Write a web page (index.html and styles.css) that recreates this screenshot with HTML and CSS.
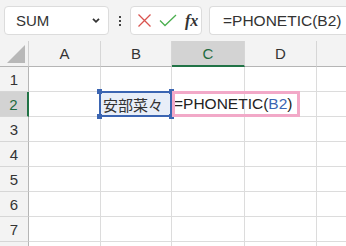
FILE: index.html
```html
<!DOCTYPE html>
<html>
<head>
<meta charset="utf-8">
<link rel="stylesheet" href="styles.css">
</head>
<body>
<div class="app">
  <div class="toolbar">
    <div class="namebox">
      <span class="name">SUM</span>
      <svg class="chev" width="10" height="7" viewBox="0 0 10 7"><path d="M2 1.8 L5 4.8 L8 1.8" fill="none" stroke="#333" stroke-width="1.8"/></svg>
    </div>
    <div class="dots"><i></i><i></i><i></i></div>
    <div class="btns">
      <svg class="ic" width="15" height="15" viewBox="0 0 15 15"><path d="M1.5 1.5 L13.5 13.5 M13.5 1.5 L1.5 13.5" stroke="#d9534f" stroke-width="1.3" fill="none"/></svg>
      <svg class="ic" width="18" height="13" viewBox="0 0 18 13"><path d="M1 6.5 L6 11.5 L17 1" stroke="#4caf50" stroke-width="1.3" fill="none"/></svg>
      <span class="fx">fx</span>
    </div>
    <div class="formula">=PHONETIC(B2)</div>
  </div>
  <div class="grid">
    <div class="corner"><span class="tri"></span></div>
    <div class="ch">A</div>
    <div class="ch">B</div>
    <div class="ch active">C</div>
    <div class="ch">D</div>
    <div class="ch last"></div>

    <div class="rh">1</div>
    <div class="c"></div><div class="c"></div><div class="c"></div><div class="c"></div><div class="c last"></div>

    <div class="rh active">2</div>
    <div class="c"></div>
    <div class="c ref"><span class="txt jp">安部菜々</span><span class="refbox"><i class="h tl"></i><i class="h tr"></i><i class="h bl"></i><i class="h br"></i></span></div>
    <div class="c edit"><span class="txt">=PHONETIC(<span class="blue">B2</span>)</span><span class="editbox"></span></div>
    <div class="c"></div><div class="c last"></div>

    <div class="rh">3</div>
    <div class="c"></div><div class="c"></div><div class="c"></div><div class="c"></div><div class="c last"></div>
    <div class="rh">4</div>
    <div class="c"></div><div class="c"></div><div class="c"></div><div class="c"></div><div class="c last"></div>
    <div class="rh">5</div>
    <div class="c"></div><div class="c"></div><div class="c"></div><div class="c"></div><div class="c last"></div>
    <div class="rh">6</div>
    <div class="c"></div><div class="c"></div><div class="c"></div><div class="c"></div><div class="c last"></div>
    <div class="rh">7</div>
    <div class="c"></div><div class="c"></div><div class="c"></div><div class="c"></div><div class="c last"></div>
    <div class="rh"></div>
    <div class="c"></div><div class="c"></div><div class="c"></div><div class="c"></div><div class="c last"></div>
  </div>
</div>
</body>
</html>
```
FILE: styles.css
```css
html, body {
  margin: 0;
  padding: 0;
  background: #ffffff;
}
.app {
  width: 346px;
  height: 246px;
  overflow: hidden;
  font-family: "Liberation Sans", "Noto Sans CJK JP", sans-serif;
  color: #222;
}
.toolbar {
  height: 41px;
  background: #f3f3f3;
  display: flex;
  align-items: center;
  padding-left: 4px;
  box-sizing: border-box;
}
.namebox {
  width: 105px;
  height: 29px;
  box-sizing: border-box;
  background: #fff;
  border: 1px solid #dcdcdc;
  border-radius: 4px;
  display: flex;
  align-items: center;
  justify-content: space-between;
  padding: 0 7px 0 11px;
}
.name {
  font-size: 15px;
  color: #333;
}
.dots {
  width: 21px;
  display: flex;
  flex-direction: column;
  align-items: center;
  gap: 2px;
}
.dots i {
  display: block;
  width: 2px;
  height: 2px;
  background: #444;
}
.btns {
  width: 72px;
  height: 29px;
  box-sizing: border-box;
  background: #fff;
  border: 1px solid #dcdcdc;
  border-radius: 4px;
  display: flex;
  align-items: center;
  gap: 7px;
  padding-left: 6px;
}
.fx {
  font-family: "Liberation Serif", serif;
  font-style: italic;
  font-weight: bold;
  font-size: 16px;
  color: #333;
  margin-left: 1px;
}
.formula {
  margin-left: 7px;
  flex: 1;
  height: 29px;
  box-sizing: border-box;
  background: #fff;
  border: 1px solid #dcdcdc;
  border-right: none;
  border-radius: 4px 0 0 4px;
  display: flex;
  align-items: center;
  padding-left: 13px;
  font-size: 15.5px;
  color: #333;
}
.grid {
  display: grid;
  grid-template-columns: 29px 72px 71px 73px 72px 1fr;
  grid-template-rows: 26px repeat(8, 25px);
}
.corner {
  background: #f3f3f3;
  border-right: 1px solid #d0d0d0;
  border-bottom: 1px solid #b5b5b5;
  position: relative;
}
.tri {
  position: absolute;
  right: 3px;
  bottom: 3px;
  width: 0;
  height: 0;
  border-left: 18px solid transparent;
  border-bottom: 18px solid #b8b8b8;
}
.ch {
  background: #f3f3f3;
  border-right: 1px solid #d6d6d6;
  border-bottom: 1px solid #b5b5b5;
  display: flex;
  align-items: center;
  justify-content: center;
  font-size: 15px;
  color: #333;
}
.ch.active {
  background: #d3d3d3;
  border-bottom: 2px solid #217346;
  color: #1e6b40;
}
.rh {
  background: #f3f3f3;
  border-right: 1px solid #b5b5b5;
  border-bottom: 1px solid #d6d6d6;
  display: flex;
  align-items: center;
  justify-content: center;
  font-size: 15px;
  color: #333;
}
.rh.active {
  background: #d3d3d3;
  border-right: 2px solid #217346;
  color: #1e6b40;
}
.c {
  border-right: 1px solid #dcdcdc;
  border-bottom: 1px solid #dcdcdc;
  position: relative;
  display: flex;
  align-items: center;
}
.last {
  border-right: none;
}
.txt {
  font-size: 15.5px;
  white-space: nowrap;
  position: relative;
  z-index: 2;
}
.jp {
  font-size: 15px;
  padding-left: 2px;
  color: #333;
}
.ref {
  background: #e8eef8;
}
.refbox {
  position: absolute;
  left: -2px;
  top: -1px;
  right: -1px;
  bottom: -1px;
  border: 2px solid #3b65b2;
  z-index: 3;
}
.h {
  position: absolute;
  width: 5px;
  height: 5px;
  background: #3b65b2;
}
.h.tl { left: -4px; top: -4px; }
.h.tr { right: -4px; top: -4px; }
.h.bl { left: -4px; bottom: -4px; }
.h.br { right: -4px; bottom: -4px; }
.edit .txt {
  padding-left: 2px;
  color: #222;
}
.editbox {
  position: absolute;
  left: 0;
  top: -1px;
  width: 128px;
  bottom: -1px;
  border: 3px solid #f2a9c8;
  box-sizing: border-box;
  z-index: 3;
  pointer-events: none;
}
.blue {
  color: #3b65b2;
}
```
